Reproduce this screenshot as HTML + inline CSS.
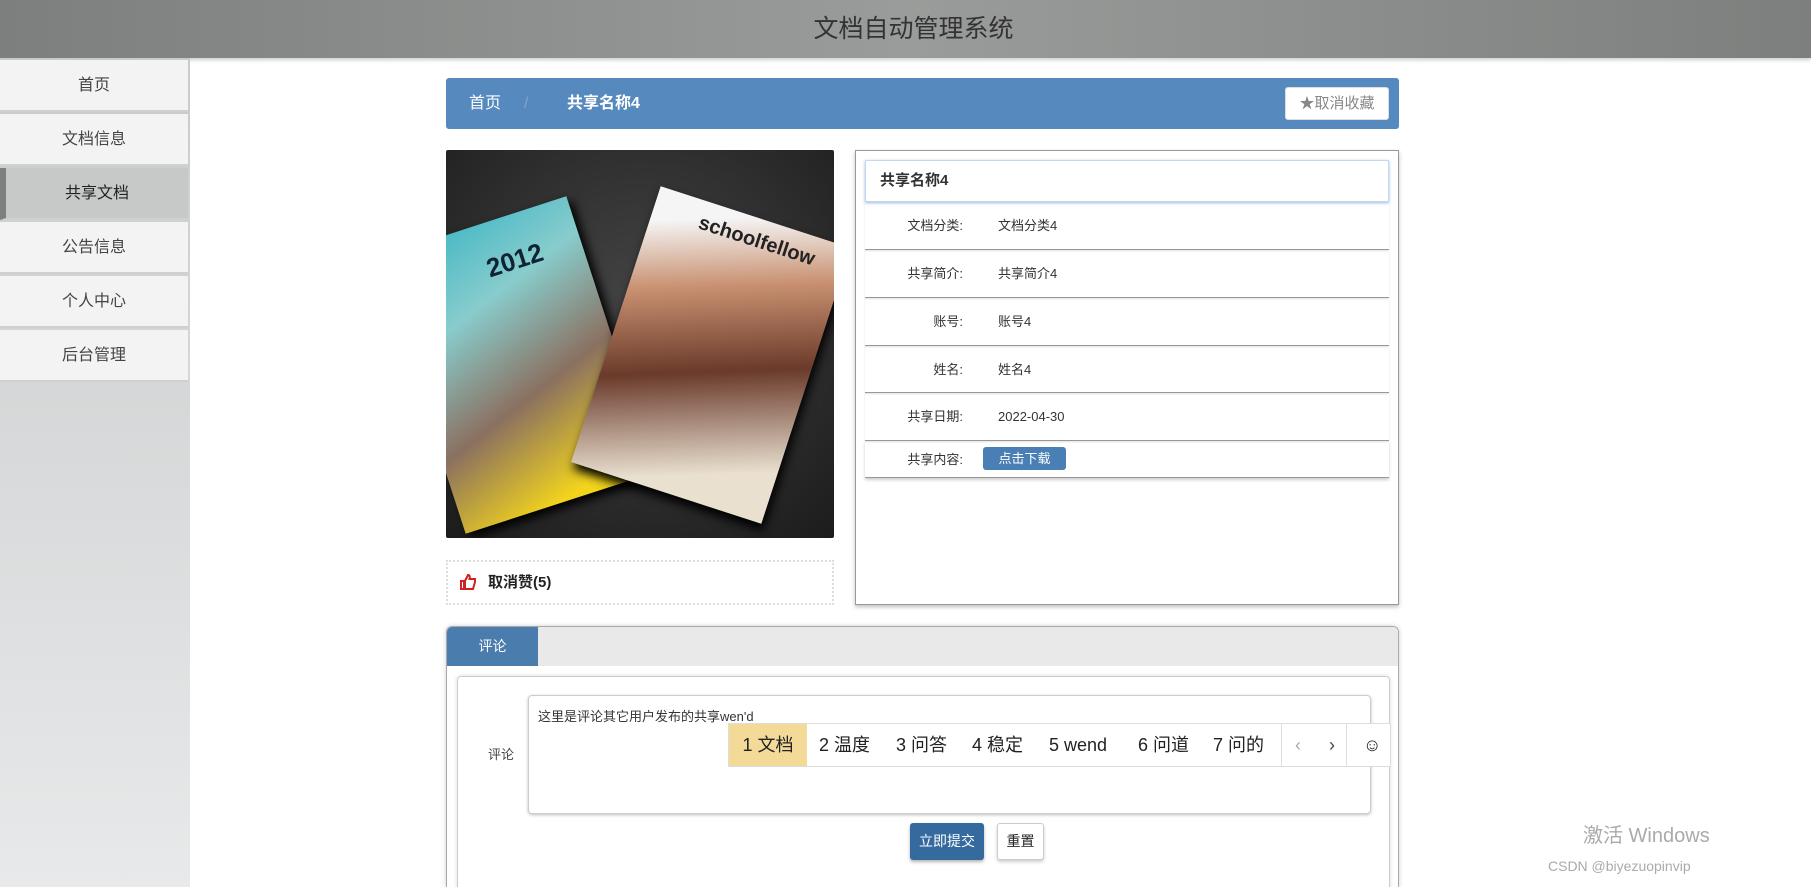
<!DOCTYPE html>
<html style="width:1811px;height:887px;overflow:hidden"><head><meta charset="utf-8"><style>
*{box-sizing:border-box;margin:0;padding:0}
body{width:1811px;height:887px;overflow:hidden;background:#fff;font-family:"Liberation Sans","Noto Sans CJK SC",sans-serif;position:relative;color:#333}
.abs{position:absolute}
#hd{left:0;top:0;width:1811px;height:58px;background:linear-gradient(90deg,#7d7f7e,#9a9c9b 50%,#7d7f7e);text-align:center;line-height:58px;font-size:25px;color:#333;box-shadow:0 2px 4px rgba(0,0,0,.2);padding-left:16px}
#sb{left:0;top:58px;width:190px;height:829px;background:linear-gradient(#c9cbcb,#d8dadb 50%,#e8e9ea)}
.it{position:absolute;left:0;width:188px;height:52px;background:#f3f3f3;border-bottom:2px solid #d0d0d0;text-align:center;line-height:52px;font-size:16px;color:#444}
.it.act{background:#c6c9c7;border-left:6px solid #7d7f80;color:#222}
#bc{left:446px;top:78px;width:953px;height:51px;background:#5689bd;border-radius:3px;color:#fff;font-size:16px;line-height:51px}
#fav{left:1285px;top:87px;width:104px;height:33px;background:#fff;border-radius:3px;border:1px solid #ddd;color:#888;font-size:15px;line-height:31px;text-align:center}
#img{left:446px;top:150px;width:388px;height:388px;background:radial-gradient(circle at 50% 40%,#444,#1c1c1c);overflow:hidden;border-radius:2px}
#det{left:855px;top:150px;width:544px;height:455px;border:1px solid #999;box-shadow:0 2px 4px rgba(0,0,0,.25)}
.row{position:absolute;left:9px;width:524px;border-bottom:1px solid #999;font-size:13px;color:#333;box-shadow:0 1px 2px rgba(0,0,0,.12)}
.row .l{position:absolute;right:426px;text-align:right}
.row .v{position:absolute;left:133px}
#like{left:446px;top:560px;width:388px;height:45px;border:2px dotted #ddd;font-size:15px;font-weight:bold;color:#222;line-height:41px;padding-left:40px}
#cm{left:446px;top:626px;width:953px;height:261px;border:1px solid #aaa;border-bottom:none;border-radius:6px 6px 0 0;box-shadow:0 0 5px rgba(0,0,0,.2);overflow:hidden}
.btn{position:absolute;font-size:14px;text-align:center;border-radius:3px}
#ime span{position:absolute;top:0}
</style></head><body>
<div id="hd" class="abs">文档自动管理系统</div>
<div id="sb" class="abs">
<div class="it" style="top:2px">首页</div>
<div class="it" style="top:56px">文档信息</div>
<div class="it act" style="top:110px">共享文档</div>
<div class="it" style="top:164px">公告信息</div>
<div class="it" style="top:218px">个人中心</div>
<div class="it" style="top:272px">后台管理</div>
</div>
<div id="bc" class="abs"><span style="position:absolute;left:23px">首页</span><span style="position:absolute;left:78px;color:#7fa5cc">/</span><span style="position:absolute;left:121px;font-weight:bold">共享名称4</span></div>
<div id="fav" class="abs">★取消收藏</div>
<div id="img" class="abs">
<div class="abs" style="left:-30px;top:70px;width:200px;height:290px;background:linear-gradient(160deg,#3ab5c5,#8cc 30%,#8a7060 60%,#f2d41c 90%);transform:rotate(-18deg);box-shadow:4px 6px 10px #000"></div>
<div class="abs" style="left:165px;top:60px;width:200px;height:290px;background:linear-gradient(160deg,#f5f5f5 10%,#c89070 30%,#6a3a2a 55%,#e9e0d0 85%);transform:rotate(18deg);box-shadow:4px 6px 10px #000"></div>
<div class="abs" style="left:250px;top:80px;font:bold 20px 'Liberation Sans';color:#222;transform:rotate(18deg)">schoolfellow</div>
<div class="abs" style="left:40px;top:95px;font:bold 26px 'Liberation Sans';color:#123;transform:rotate(-18deg)">2012</div>
</div>
<div id="det" class="abs">
<div class="row" style="top:9px;height:42px;border:1px solid #c5d8ee;box-shadow:0 1px 3px #9bd;font-size:15px;font-weight:bold;line-height:40px;padding-left:14px">共享名称4</div>
<div class="row" style="top:51px;height:48px;line-height:48px"><span class="l">文档分类:</span><span class="v">文档分类4</span></div>
<div class="row" style="top:99px;height:48px;line-height:48px"><span class="l">共享简介:</span><span class="v">共享简介4</span></div>
<div class="row" style="top:147px;height:48px;line-height:48px"><span class="l">账号:</span><span class="v">账号4</span></div>
<div class="row" style="top:195px;height:47px;line-height:47px"><span class="l">姓名:</span><span class="v">姓名4</span></div>
<div class="row" style="top:242px;height:48px;line-height:48px"><span class="l">共享日期:</span><span class="v">2022-04-30</span></div>
<div class="row" style="top:290px;height:37px;line-height:37px;box-shadow:0 2px 3px rgba(0,0,0,.2)"><span class="l">共享内容:</span><span style="position:absolute;left:118px;top:6px;width:83px;height:23px;background:#4a7fb5;color:#fff;border-radius:3px;line-height:23px;text-align:center">点击下载</span></div>
</div>
<div id="like" class="abs"><svg class="abs" style="left:11px;top:11px" width="18" height="18" viewBox="0 0 18 18"><path d="M2 8h3v8H2zM6 8l3-6c2 0 2 2 1.5 4H16v3l-2 7H6z" fill="none" stroke="#c22" stroke-width="2"/></svg>取消赞(5)</div>
<div id="cm" class="abs">
<div class="abs" style="left:0;top:0;width:953px;height:39px;background:#e9e9e9"></div>
<div class="abs" style="left:0;top:0;width:91px;height:39px;background:#4a7cae;color:#fff;font-size:14px;line-height:39px;text-align:center">评论</div>
<div class="abs" style="left:10px;top:49px;width:933px;height:230px;border:1px solid #ccc;border-radius:4px;box-shadow:0 0 4px rgba(0,0,0,.15)"></div>
<div class="abs" style="left:41px;top:117px;font-size:13px;color:#444">评论</div>
<div class="abs" style="left:81px;top:68px;width:843px;height:119px;border:1px solid #ccc;border-radius:4px;box-shadow:0 1px 3px rgba(0,0,0,.25);font-size:13px;padding:10px 9px">这里是评论其它用户发布的共享wen'd</div>
<div id="ime" class="abs" style="left:281px;top:96px;width:663px;height:44px;background:#fff;border:1px solid #ddd;font-size:18px;line-height:42px;color:#222;white-space:nowrap">
<span style="left:0;background:#f3da98;width:78px;text-align:center">1 文档</span><span style="left:90px">2 温度</span><span style="left:167px">3 问答</span><span style="left:243px">4 稳定</span><span style="left:320px">5 wend</span><span style="left:409px">6 问道</span><span style="left:484px">7 问的</span><span style="left:552px;width:1px;height:42px;background:#ddd"></span><span style="left:566px;color:#aaa">‹</span><span style="left:600px;color:#444">›</span><span style="left:617px;width:1px;height:42px;background:#ddd"></span><span style="left:634px">☺</span></div>
<div class="btn" style="left:463px;top:196px;width:74px;height:37px;background:#356a9e;color:#fff;line-height:37px;box-shadow:0 2px 3px rgba(0,0,0,.3)">立即提交</div>
<div class="btn" style="left:550px;top:196px;width:47px;height:37px;background:#fff;border:1px solid #ccc;line-height:35px;color:#222;box-shadow:0 2px 3px rgba(0,0,0,.2)">重置</div>
</div>
<div class="abs" style="left:1583px;top:819px;font-size:20px;color:#aaa">激活 Windows</div>
<div class="abs" style="left:1548px;top:858px;font-size:14px;color:#aaa">CSDN @biyezuopinvip</div>
</body></html>
